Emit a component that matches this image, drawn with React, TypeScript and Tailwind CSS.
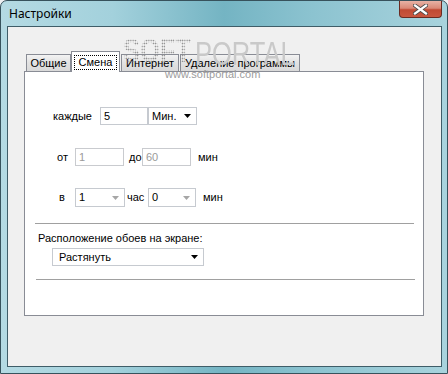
import React from "react";

const UI = { fontFamily: '"Liberation Sans", Arial, sans-serif' };

function Arrow({ gray = false }: { gray?: boolean }): React.JSX.Element {
  return (
    <svg width="7" height="4" viewBox="0 0 7 4" className="shrink-0">
      <path d="M0 0h7L3.5 4z" fill={gray ? "#a6a6a6" : "#000"} />
    </svg>
  );
}

function TextBox({ value, width, disabled = false }: { value: string; width: number; disabled?: boolean }) {
  return (
    <div
      className={
        "h-[18px] flex items-center pl-[3px] bg-white border " +
        (disabled ? "border-[#c9cbcf] text-[#9a9a9a]" : "border-[#c6cad0] text-black")
      }
      style={{ width }}
    >
      {value}
    </div>
  );
}

function Combo({ value, width, height = 18, pl = 3, grayArrow = false }: { value: string; width: number; height?: number; pl?: number; grayArrow?: boolean }) {
  return (
    <div
      className="flex items-center justify-between bg-white border border-[#c6cad0] pr-[5px]"
      style={{ width, height, paddingLeft: pl }}
    >
      <span>{value}</span>
      <Arrow gray={grayArrow} />
    </div>
  );
}

function Tab({ label, width, selected = false, className = "" }: { label: string; width: number; selected?: boolean; className?: string }) {
  if (selected) {
    return (
      <div
        className={"relative z-10 -mb-px h-[21px] bg-white border border-b-0 border-[#898c95] flex items-start justify-center pt-[3px] " + className}
        style={{ width }}
      >
        <span className="h-[15px] w-[43px] flex items-center justify-center border border-dotted border-black leading-none">
          {label}
        </span>
      </div>
    );
  }
  return (
    <div
      className={"h-[17px] border border-b-0 border-[#898c95] bg-[linear-gradient(#f3f3f3,#e3e3e3_45%,#d9d9d9)] flex items-center justify-center leading-none " + className}
      style={{ width }}
    >
      {label}
    </div>
  );
}

export default function App(): React.JSX.Element {
  return (
    <div className="w-[448px] h-[374px] overflow-hidden bg-[#eef0f2]">
      <div className="relative w-[448px] h-[374px] flex flex-col border border-[#37525c] rounded-t-[7px] bg-[linear-gradient(90deg,#b4dae3_0%,#a3d1dc_25%,#74b4c3_50%,#8cc3d0_70%,#a8d3dd_100%)] pl-[6px] pr-[5px] pb-[6px]">
        {/* title bar */}
        <div className="h-[25px] flex items-center pl-[2px] text-[12px] text-black" style={{ fontFamily: '"Noto Sans", "Open Sans", sans-serif' }}>
          Настройки
        </div>
        <div className="absolute top-0 right-[5px] w-[43px] h-[17px] rounded-b-[4px] border border-t-0 border-[#6a2b22] bg-[linear-gradient(#e7b2a5,#d98977_45%,#c04a34_55%,#c9573f)] flex items-center justify-center">
          <svg width="15" height="11" viewBox="0 0 15 11">
            <path d="M2 1.5L13 9.5M13 1.5L2 9.5" stroke="#4a4a4a" strokeWidth="4" strokeLinecap="square" />
            <path d="M2 1.5L13 9.5M13 1.5L2 9.5" stroke="#fff" strokeWidth="2.2" strokeLinecap="square" />
          </svg>
        </div>

        {/* client area */}
        <div className="relative flex-1 border border-[#3f5d68] bg-[#f0f0f0] pt-[24px] pl-[16px] pr-[17px] text-[11px] text-black" style={UI}>
          {/* tabs */}
          <div className="flex items-end h-[20px] pl-[2px]">
            <Tab label="Общие" width={45} />
            <Tab label="Смена" width={49} selected />
            <Tab label="Интернет" width={58} className="ml-px" />
            <Tab label="Удаление программы" width={120} className="ml-px" />
          </div>

          {/* panel */}
          <div className="h-[245px] border border-[#898c95] bg-white pt-[35px]">
            <div className="flex items-center h-[18px] pl-[28px]">
              <span className="w-[47px]">каждые</span>
              <TextBox value="5" width={48} />
              <Combo value="Мин." width={49} />
            </div>

            <div className="flex items-center h-[18px] pl-[32px] mt-[23px]">
              <span className="w-[18px]">от</span>
              <TextBox value="1" width={49} disabled />
              <span className="w-[18px] pl-[5px]">до</span>
              <TextBox value="60" width={49} disabled />
              <span className="pl-[7px]">мин</span>
            </div>

            <div className="flex items-center h-[19px] pl-[34px] mt-[22px]">
              <span className="w-[16px]">в</span>
              <Combo value="1" width={50} height={19} grayArrow />
              <span className="w-[23px] pl-[2px]">час</span>
              <Combo value="0" width={48} height={19} grayArrow />
              <span className="pl-[7px]">мин</span>
            </div>

            <div className="mt-[16px] ml-[10px] mr-[9px] h-px bg-[#a0a0a0]" />
            <div className="mt-[8px] ml-[13px] leading-[13px]">Расположение обоев на экране:</div>
            <div className="mt-[3px] ml-[27px]">
              <Combo value="Растянуть" width={152} pl={6} />
            </div>
            <div className="mt-[13px] ml-[11px] mr-[8px] h-px bg-[#a0a0a0]" />
          </div>

          {/* watermark */}
          <div className="pointer-events-none absolute z-20 left-[115px] top-[6px] text-[34px] font-bold leading-none text-transparent bg-clip-text bg-[radial-gradient(circle,#8a8a8a_0.8px,transparent_1.1px)] bg-[length:3px_3px] origin-left [transform:scaleX(0.75)]" style={UI}>
            SOFT
          </div>
          <div className="pointer-events-none absolute z-20 left-[187px] top-[9px] text-[34px] leading-none text-[#c9c9c9] origin-left [transform:scaleX(0.75)]" style={UI}>
            PORTAL
          </div>
          <div className="pointer-events-none absolute z-20 left-[157px] top-[42px] text-[11px] leading-none text-[#9c9c9c]" style={UI}>
            www.softportal.com
          </div>
        </div>
      </div>
    </div>
  );
}
